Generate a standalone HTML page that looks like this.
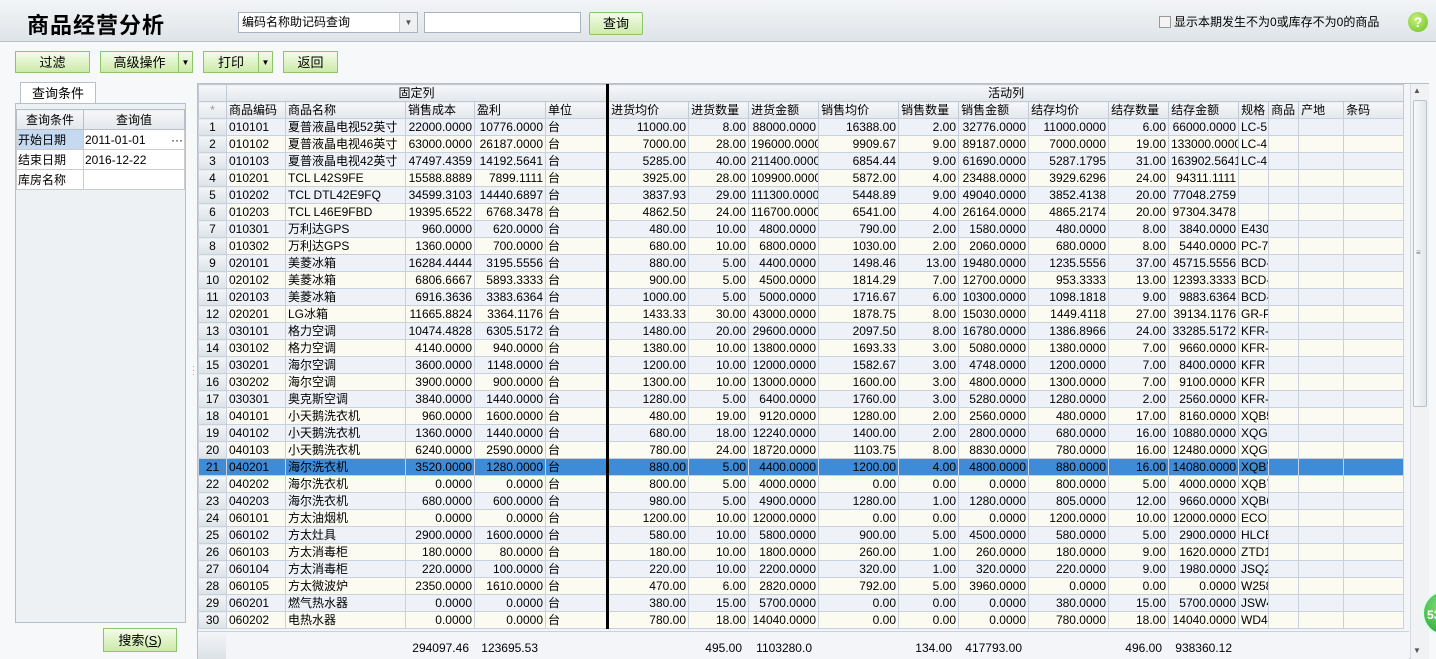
<!DOCTYPE html><html><head><meta charset="utf-8"><style>
body{margin:0;width:1436px;height:659px;overflow:hidden;background:#f7f8fa;font-family:"Liberation Sans","Noto Sans CJK SC",sans-serif;font-size:12px;color:#000;position:relative}
.abs{position:absolute}
.top{left:0;top:0;width:1436px;height:41px;background:linear-gradient(#f3f5f7,#dfe4e8);border-bottom:1px solid #b8c0c8}
.btn{position:absolute;height:22px;border:1px solid #8cc66a;background:linear-gradient(#f4fbe9,#cdeaa9);text-align:center;line-height:22px;font-size:13px;box-sizing:border-box}
table{border-collapse:collapse;table-layout:fixed}
#g td{height:16px;border:1px solid #c9d2dc;padding:0 2px;white-space:nowrap;overflow:hidden;font-size:12px;line-height:16px;text-align:right}
#g tr:nth-child(odd) td{background:#eef2f8}
#g tr:nth-child(even) td{background:#fbfbf2}
#g td.l{text-align:left}
#g td.n{background:linear-gradient(#f3f5f7,#dde2e7)!important;text-align:center}
#g td.k{border-right:3px solid #000}
#g tr.s td{background:#3e8bd8!important}
#h td{height:16px;border:1px solid #c1c9d2;background:linear-gradient(#f6f7f9,#e3e7eb);padding:0 2px;white-space:nowrap;overflow:hidden;font-size:12px;line-height:16px}
</style></head><body>
<div class="abs top"></div>
<div class="abs" style="left:27px;top:8px;font-size:22px;font-weight:bold;letter-spacing:1px">商品经营分析</div>
<div class="abs" style="left:238px;top:12px;width:180px;height:21px;border:1px solid #a9b3bd;background:#fff;box-sizing:border-box;line-height:19px;padding-left:3px">编码名称助记码查询<span class="abs" style="right:0;top:0;width:17px;height:19px;border-left:1px solid #ccc;background:#eef0f2;text-align:center;font-size:8px;color:#555">▼</span></div>
<div class="abs" style="left:424px;top:12px;width:157px;height:21px;border:1px solid #a9b3bd;background:#fff;box-sizing:border-box"></div>
<div class="btn" style="left:589px;top:12px;width:54px;height:23px;border-radius:2px">查询</div>
<div class="abs" style="left:1159px;top:16px;width:10px;height:10px;border:1px solid #999;background:#f3f3f3"></div>
<div class="abs" style="left:1174px;top:13px;font-size:12px">显示本期发生不为0或库存不为0的商品</div>
<div class="abs" style="left:1408px;top:12px;width:20px;height:20px;border-radius:50%;background:radial-gradient(circle at 40% 35%,#c8f080,#6cbf1c);color:#fff;font-weight:bold;text-align:center;line-height:20px;font-size:14px">?</div>
<div class="btn" style="left:15px;top:51px;width:75px">过滤</div>
<div class="btn" style="left:100px;top:51px;width:79px">高级操作</div><div class="btn" style="left:178px;top:51px;width:15px;font-size:8px">▼</div>
<div class="btn" style="left:203px;top:51px;width:56px">打印</div><div class="btn" style="left:258px;top:51px;width:15px;font-size:8px">▼</div>
<div class="btn" style="left:283px;top:51px;width:55px">返回</div>
<div class="abs" style="left:20px;top:82px;width:74px;height:21px;border:1px solid #b7c0c9;border-bottom:none;background:#fff;text-align:center;line-height:21px;font-size:13px">查询条件</div>
<div class="abs" style="left:15px;top:103px;width:171px;height:520px;border:1px solid #b7c0c9;background:#eef1f4;box-sizing:border-box"></div>
<table class="abs" style="left:16px;top:109px;width:169px">
<tr><td style="width:64px;border:1px solid #b7c0c9;background:linear-gradient(#f6f7f9,#e3e7eb);text-align:center;height:16px">查询条件</td><td style="border:1px solid #b7c0c9;background:linear-gradient(#f6f7f9,#e3e7eb);text-align:center">查询值</td></tr>
<tr><td style="border:1px solid #ccc;background:#c5d9f0;height:16px">开始日期</td><td style="border:1px solid #ccc;background:#fff">2011-01-01<span style="float:right">···</span></td></tr>
<tr><td style="border:1px solid #ccc;background:#fff;height:16px">结束日期</td><td style="border:1px solid #ccc;background:#fff">2016-12-22</td></tr>
<tr><td style="border:1px solid #ccc;background:#fff;height:16px">库房名称</td><td style="border:1px solid #ccc;background:#fff"></td></tr>
</table>
<div class="btn" style="left:103px;top:628px;width:74px;height:24px;line-height:24px">搜索(<u>S</u>)</div>
<div class="abs" style="left:192px;top:365px;color:#888;font-size:8px;line-height:4px">·<br>·<br>·</div>
<div class="abs" style="left:197px;top:83px;width:1232px;height:576px;border:1px solid #b7c0c9;background:#f3f5f8;box-sizing:border-box"></div>
<table id="h" class="abs" style="left:198px;top:84px;width:1205px">
<colgroup><col style="width:28px"><col style="width:59px"><col style="width:120px"><col style="width:69px"><col style="width:71px"><col style="width:62px"><col style="width:81px"><col style="width:60px"><col style="width:70px"><col style="width:80px"><col style="width:60px"><col style="width:70px"><col style="width:80px"><col style="width:60px"><col style="width:70px"><col style="width:30px"><col style="width:30px"><col style="width:45px"><col style="width:60px"></colgroup>
<tr><td></td><td colspan="5" style="text-align:center;border-right:3px solid #000">固定列</td><td colspan="13" style="text-align:center">活动列</td></tr>
<tr><td style="text-align:center;color:#999">*</td><td>商品编码</td><td>商品名称</td><td>销售成本</td><td>盈利</td><td style="border-right:3px solid #000">单位</td><td>进货均价</td><td>进货数量</td><td>进货金额</td><td>销售均价</td><td>销售数量</td><td>销售金额</td><td>结存均价</td><td>结存数量</td><td>结存金额</td><td>规格</td><td>商品</td><td>产地</td><td>条码</td></tr>
</table>
<table id="g" class="abs" style="left:198px;top:118px;width:1205px">
<colgroup><col style="width:28px"><col style="width:59px"><col style="width:120px"><col style="width:69px"><col style="width:71px"><col style="width:62px"><col style="width:81px"><col style="width:60px"><col style="width:70px"><col style="width:80px"><col style="width:60px"><col style="width:70px"><col style="width:80px"><col style="width:60px"><col style="width:70px"><col style="width:30px"><col style="width:30px"><col style="width:45px"><col style="width:60px"></colgroup>
<tr><td class="n">1</td><td class="l">010101</td><td class="l">夏普液晶电视52英寸</td><td>22000.0000</td><td>10776.0000</td><td class="l k">台</td><td>11000.00</td><td>8.00</td><td>88000.0000</td><td>16388.00</td><td>2.00</td><td>32776.0000</td><td>11000.0000</td><td>6.00</td><td>66000.0000</td><td class="l">LC-5</td><td></td><td></td><td></td></tr>
<tr><td class="n">2</td><td class="l">010102</td><td class="l">夏普液晶电视46英寸</td><td>63000.0000</td><td>26187.0000</td><td class="l k">台</td><td>7000.00</td><td>28.00</td><td>196000.0000</td><td>9909.67</td><td>9.00</td><td>89187.0000</td><td>7000.0000</td><td>19.00</td><td>133000.0000</td><td class="l">LC-4</td><td></td><td></td><td></td></tr>
<tr><td class="n">3</td><td class="l">010103</td><td class="l">夏普液晶电视42英寸</td><td>47497.4359</td><td>14192.5641</td><td class="l k">台</td><td>5285.00</td><td>40.00</td><td>211400.0000</td><td>6854.44</td><td>9.00</td><td>61690.0000</td><td>5287.1795</td><td>31.00</td><td>163902.5641</td><td class="l">LC-4</td><td></td><td></td><td></td></tr>
<tr><td class="n">4</td><td class="l">010201</td><td class="l">TCL L42S9FE</td><td>15588.8889</td><td>7899.1111</td><td class="l k">台</td><td>3925.00</td><td>28.00</td><td>109900.0000</td><td>5872.00</td><td>4.00</td><td>23488.0000</td><td>3929.6296</td><td>24.00</td><td>94311.1111</td><td class="l"></td><td></td><td></td><td></td></tr>
<tr><td class="n">5</td><td class="l">010202</td><td class="l">TCL DTL42E9FQ</td><td>34599.3103</td><td>14440.6897</td><td class="l k">台</td><td>3837.93</td><td>29.00</td><td>111300.0000</td><td>5448.89</td><td>9.00</td><td>49040.0000</td><td>3852.4138</td><td>20.00</td><td>77048.2759</td><td class="l"></td><td></td><td></td><td></td></tr>
<tr><td class="n">6</td><td class="l">010203</td><td class="l">TCL L46E9FBD</td><td>19395.6522</td><td>6768.3478</td><td class="l k">台</td><td>4862.50</td><td>24.00</td><td>116700.0000</td><td>6541.00</td><td>4.00</td><td>26164.0000</td><td>4865.2174</td><td>20.00</td><td>97304.3478</td><td class="l"></td><td></td><td></td><td></td></tr>
<tr><td class="n">7</td><td class="l">010301</td><td class="l">万利达GPS</td><td>960.0000</td><td>620.0000</td><td class="l k">台</td><td>480.00</td><td>10.00</td><td>4800.0000</td><td>790.00</td><td>2.00</td><td>1580.0000</td><td>480.0000</td><td>8.00</td><td>3840.0000</td><td class="l">E430</td><td></td><td></td><td></td></tr>
<tr><td class="n">8</td><td class="l">010302</td><td class="l">万利达GPS</td><td>1360.0000</td><td>700.0000</td><td class="l k">台</td><td>680.00</td><td>10.00</td><td>6800.0000</td><td>1030.00</td><td>2.00</td><td>2060.0000</td><td>680.0000</td><td>8.00</td><td>5440.0000</td><td class="l">PC-7</td><td></td><td></td><td></td></tr>
<tr><td class="n">9</td><td class="l">020101</td><td class="l">美菱冰箱</td><td>16284.4444</td><td>3195.5556</td><td class="l k">台</td><td>880.00</td><td>5.00</td><td>4400.0000</td><td>1498.46</td><td>13.00</td><td>19480.0000</td><td>1235.5556</td><td>37.00</td><td>45715.5556</td><td class="l">BCD-</td><td></td><td></td><td></td></tr>
<tr><td class="n">10</td><td class="l">020102</td><td class="l">美菱冰箱</td><td>6806.6667</td><td>5893.3333</td><td class="l k">台</td><td>900.00</td><td>5.00</td><td>4500.0000</td><td>1814.29</td><td>7.00</td><td>12700.0000</td><td>953.3333</td><td>13.00</td><td>12393.3333</td><td class="l">BCD-</td><td></td><td></td><td></td></tr>
<tr><td class="n">11</td><td class="l">020103</td><td class="l">美菱冰箱</td><td>6916.3636</td><td>3383.6364</td><td class="l k">台</td><td>1000.00</td><td>5.00</td><td>5000.0000</td><td>1716.67</td><td>6.00</td><td>10300.0000</td><td>1098.1818</td><td>9.00</td><td>9883.6364</td><td class="l">BCD-</td><td></td><td></td><td></td></tr>
<tr><td class="n">12</td><td class="l">020201</td><td class="l">LG冰箱</td><td>11665.8824</td><td>3364.1176</td><td class="l k">台</td><td>1433.33</td><td>30.00</td><td>43000.0000</td><td>1878.75</td><td>8.00</td><td>15030.0000</td><td>1449.4118</td><td>27.00</td><td>39134.1176</td><td class="l">GR-P</td><td></td><td></td><td></td></tr>
<tr><td class="n">13</td><td class="l">030101</td><td class="l">格力空调</td><td>10474.4828</td><td>6305.5172</td><td class="l k">台</td><td>1480.00</td><td>20.00</td><td>29600.0000</td><td>2097.50</td><td>8.00</td><td>16780.0000</td><td>1386.8966</td><td>24.00</td><td>33285.5172</td><td class="l">KFR-</td><td></td><td></td><td></td></tr>
<tr><td class="n">14</td><td class="l">030102</td><td class="l">格力空调</td><td>4140.0000</td><td>940.0000</td><td class="l k">台</td><td>1380.00</td><td>10.00</td><td>13800.0000</td><td>1693.33</td><td>3.00</td><td>5080.0000</td><td>1380.0000</td><td>7.00</td><td>9660.0000</td><td class="l">KFR-</td><td></td><td></td><td></td></tr>
<tr><td class="n">15</td><td class="l">030201</td><td class="l">海尔空调</td><td>3600.0000</td><td>1148.0000</td><td class="l k">台</td><td>1200.00</td><td>10.00</td><td>12000.0000</td><td>1582.67</td><td>3.00</td><td>4748.0000</td><td>1200.0000</td><td>7.00</td><td>8400.0000</td><td class="l">KFR</td><td></td><td></td><td></td></tr>
<tr><td class="n">16</td><td class="l">030202</td><td class="l">海尔空调</td><td>3900.0000</td><td>900.0000</td><td class="l k">台</td><td>1300.00</td><td>10.00</td><td>13000.0000</td><td>1600.00</td><td>3.00</td><td>4800.0000</td><td>1300.0000</td><td>7.00</td><td>9100.0000</td><td class="l">KFR</td><td></td><td></td><td></td></tr>
<tr><td class="n">17</td><td class="l">030301</td><td class="l">奥克斯空调</td><td>3840.0000</td><td>1440.0000</td><td class="l k">台</td><td>1280.00</td><td>5.00</td><td>6400.0000</td><td>1760.00</td><td>3.00</td><td>5280.0000</td><td>1280.0000</td><td>2.00</td><td>2560.0000</td><td class="l">KFR-</td><td></td><td></td><td></td></tr>
<tr><td class="n">18</td><td class="l">040101</td><td class="l">小天鹅洗衣机</td><td>960.0000</td><td>1600.0000</td><td class="l k">台</td><td>480.00</td><td>19.00</td><td>9120.0000</td><td>1280.00</td><td>2.00</td><td>2560.0000</td><td>480.0000</td><td>17.00</td><td>8160.0000</td><td class="l">XQB5</td><td></td><td></td><td></td></tr>
<tr><td class="n">19</td><td class="l">040102</td><td class="l">小天鹅洗衣机</td><td>1360.0000</td><td>1440.0000</td><td class="l k">台</td><td>680.00</td><td>18.00</td><td>12240.0000</td><td>1400.00</td><td>2.00</td><td>2800.0000</td><td>680.0000</td><td>16.00</td><td>10880.0000</td><td class="l">XQG6</td><td></td><td></td><td></td></tr>
<tr><td class="n">20</td><td class="l">040103</td><td class="l">小天鹅洗衣机</td><td>6240.0000</td><td>2590.0000</td><td class="l k">台</td><td>780.00</td><td>24.00</td><td>18720.0000</td><td>1103.75</td><td>8.00</td><td>8830.0000</td><td>780.0000</td><td>16.00</td><td>12480.0000</td><td class="l">XQG6</td><td></td><td></td><td></td></tr>
<tr class="s"><td class="n">21</td><td class="l">040201</td><td class="l">海尔洗衣机</td><td>3520.0000</td><td>1280.0000</td><td class="l k">台</td><td>880.00</td><td>5.00</td><td>4400.0000</td><td>1200.00</td><td>4.00</td><td>4800.0000</td><td>880.0000</td><td>16.00</td><td>14080.0000</td><td class="l">XQB7</td><td></td><td></td><td></td></tr>
<tr><td class="n">22</td><td class="l">040202</td><td class="l">海尔洗衣机</td><td>0.0000</td><td>0.0000</td><td class="l k">台</td><td>800.00</td><td>5.00</td><td>4000.0000</td><td>0.00</td><td>0.00</td><td>0.0000</td><td>800.0000</td><td>5.00</td><td>4000.0000</td><td class="l">XQB7</td><td></td><td></td><td></td></tr>
<tr><td class="n">23</td><td class="l">040203</td><td class="l">海尔洗衣机</td><td>680.0000</td><td>600.0000</td><td class="l k">台</td><td>980.00</td><td>5.00</td><td>4900.0000</td><td>1280.00</td><td>1.00</td><td>1280.0000</td><td>805.0000</td><td>12.00</td><td>9660.0000</td><td class="l">XQB6</td><td></td><td></td><td></td></tr>
<tr><td class="n">24</td><td class="l">060101</td><td class="l">方太油烟机</td><td>0.0000</td><td>0.0000</td><td class="l k">台</td><td>1200.00</td><td>10.00</td><td>12000.0000</td><td>0.00</td><td>0.00</td><td>0.0000</td><td>1200.0000</td><td>10.00</td><td>12000.0000</td><td class="l">ECO2</td><td></td><td></td><td></td></tr>
<tr><td class="n">25</td><td class="l">060102</td><td class="l">方太灶具</td><td>2900.0000</td><td>1600.0000</td><td class="l k">台</td><td>580.00</td><td>10.00</td><td>5800.0000</td><td>900.00</td><td>5.00</td><td>4500.0000</td><td>580.0000</td><td>5.00</td><td>2900.0000</td><td class="l">HLCB</td><td></td><td></td><td></td></tr>
<tr><td class="n">26</td><td class="l">060103</td><td class="l">方太消毒柜</td><td>180.0000</td><td>80.0000</td><td class="l k">台</td><td>180.00</td><td>10.00</td><td>1800.0000</td><td>260.00</td><td>1.00</td><td>260.0000</td><td>180.0000</td><td>9.00</td><td>1620.0000</td><td class="l">ZTD1</td><td></td><td></td><td></td></tr>
<tr><td class="n">27</td><td class="l">060104</td><td class="l">方太消毒柜</td><td>220.0000</td><td>100.0000</td><td class="l k">台</td><td>220.00</td><td>10.00</td><td>2200.0000</td><td>320.00</td><td>1.00</td><td>320.0000</td><td>220.0000</td><td>9.00</td><td>1980.0000</td><td class="l">JSQ2</td><td></td><td></td><td></td></tr>
<tr><td class="n">28</td><td class="l">060105</td><td class="l">方太微波炉</td><td>2350.0000</td><td>1610.0000</td><td class="l k">台</td><td>470.00</td><td>6.00</td><td>2820.0000</td><td>792.00</td><td>5.00</td><td>3960.0000</td><td>0.0000</td><td>0.00</td><td>0.0000</td><td class="l">W258</td><td></td><td></td><td></td></tr>
<tr><td class="n">29</td><td class="l">060201</td><td class="l">燃气热水器</td><td>0.0000</td><td>0.0000</td><td class="l k">台</td><td>380.00</td><td>15.00</td><td>5700.0000</td><td>0.00</td><td>0.00</td><td>0.0000</td><td>380.0000</td><td>15.00</td><td>5700.0000</td><td class="l">JSW4</td><td></td><td></td><td></td></tr>
<tr><td class="n">30</td><td class="l">060202</td><td class="l">电热水器</td><td>0.0000</td><td>0.0000</td><td class="l k">台</td><td>780.00</td><td>18.00</td><td>14040.0000</td><td>0.00</td><td>0.00</td><td>0.0000</td><td>780.0000</td><td>18.00</td><td>14040.0000</td><td class="l">WD45</td><td></td><td></td><td></td></tr>
</table>
<div class="abs" style="left:198px;top:631px;width:1211px;height:27px;background:#f3f5f8;border-top:1px solid #c9d2dc"></div>
<div class="abs" style="left:198px;top:632px;width:28px;height:27px;background:linear-gradient(#f3f5f7,#dde2e7)"></div>
<div class="abs" style="top:641px;left:0;width:1436px;font-size:12px">
<span class="abs" style="left:405px;width:64px;text-align:right">294097.46</span>
<span class="abs" style="left:474px;width:64px;text-align:right">123695.53</span>
<span class="abs" style="left:688px;width:54px;text-align:right">495.00</span>
<span class="abs" style="left:748px;width:64px;text-align:right">1103280.0</span>
<span class="abs" style="left:898px;width:54px;text-align:right">134.00</span>
<span class="abs" style="left:958px;width:64px;text-align:right">417793.00</span>
<span class="abs" style="left:1108px;width:54px;text-align:right">496.00</span>
<span class="abs" style="left:1168px;width:64px;text-align:right">938360.12</span>
</div>
<div class="abs" style="left:1410px;top:84px;width:18px;height:575px;background:#f0f2f4;border-left:1px solid #d5dbe1"></div>
<div class="abs" style="left:1413px;top:86px;font-size:8px;color:#555">▲</div>
<div class="abs" style="left:1413px;top:100px;width:14px;height:307px;border:1px solid #b9c1c9;background:linear-gradient(90deg,#f8f9fa,#e3e7ea);box-sizing:border-box;border-radius:2px"></div>
<div class="abs" style="left:1416px;top:248px;font-size:8px;color:#777">≡</div>
<div class="abs" style="left:1413px;top:646px;font-size:8px;color:#555">▼</div>
<div class="abs" style="left:1422px;top:590px;width:46px;height:46px;border-radius:50%;background:radial-gradient(circle at 40% 35%,#7ee07a,#1e9a2a);border:2px solid #dfe;color:#fff;font-weight:bold;line-height:46px;padding-left:3px;font-size:12px;box-sizing:border-box">53</div>
</body></html>
